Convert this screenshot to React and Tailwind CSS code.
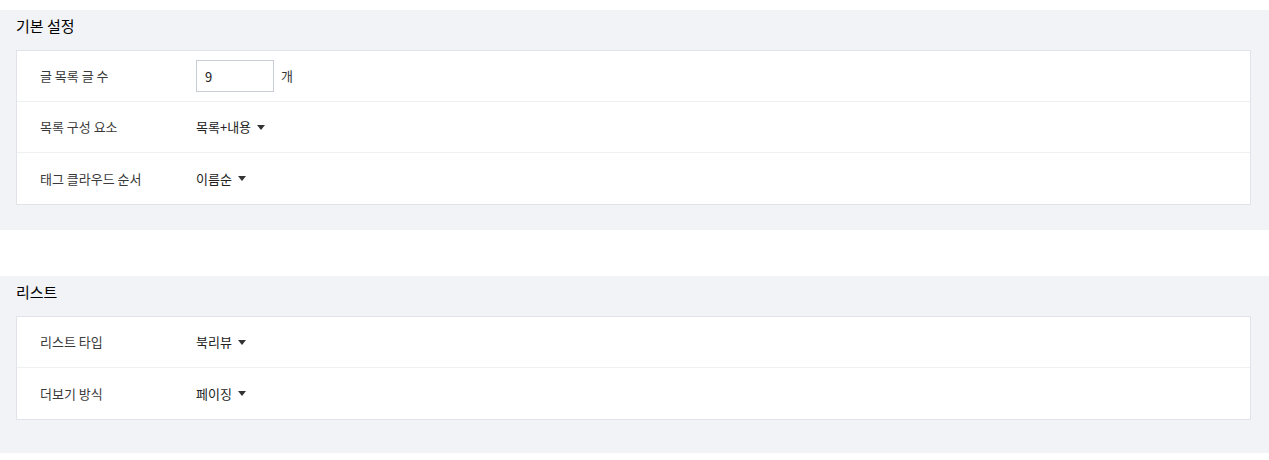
const font = { fontFamily: '"Noto Sans CJK KR", "Noto Sans", sans-serif' };

const Caret = () => (
  <svg width="8" height="5" viewBox="0 0 8 5" className="ml-[6px]">
    <path d="M0 0h8L4 5z" fill="#333" />
  </svg>
);

const Row = ({ label, children, last }) => (
  <div className={'flex items-center h-[51px] ' + (last ? '' : 'border-b border-[#eef0f3]')}>
    <div className="w-[179px] pl-[23px] text-[13px] text-[#3a3a3a]">{label}</div>
    <div className="flex items-center text-[13px] text-[#222]">{children}</div>
  </div>
);

const Select = ({ value }) => (
  <button className="flex items-center text-[13px] text-[#222]">
    {value}
    <Caret />
  </button>
);

const Section = ({ title, children, className }) => (
  <section className={'bg-[#f2f3f7] pl-4 pr-[18px] ' + className}>
    <h2 className="text-[15px] leading-[18px] font-normal text-black h-[40px] pt-[7px]">{title}</h2>
    <div className="bg-white border border-[#e0e3e9]">{children}</div>
  </section>
);

export default function App() {
  return (
    <div className="bg-white w-[1269px] h-[460px] pt-[10px]" style={font}>
      <Section title="기본 설정" className="pb-[25px]">
        <Row label="글 목록 글 수">
          <input
            defaultValue="9"
            className="w-[78px] h-[32px] border border-[#c9ced6] px-[8px] text-[13px] text-[#222] outline-none"
          />
          <span className="ml-[7px] text-[13px] text-[#333]">개</span>
        </Row>
        <Row label="목록 구성 요소">
          <Select value="목록+내용" />
        </Row>
        <Row label="태그 클라우드 순서" last>
          <Select value="이름순" />
        </Row>
      </Section>
      <div className="h-[46px]" />
      <Section title="리스트" className="pb-[33px]">
        <Row label="리스트 타입">
          <Select value="북리뷰" />
        </Row>
        <Row label="더보기 방식" last>
          <Select value="페이징" />
        </Row>
      </Section>
    </div>
  );
}
